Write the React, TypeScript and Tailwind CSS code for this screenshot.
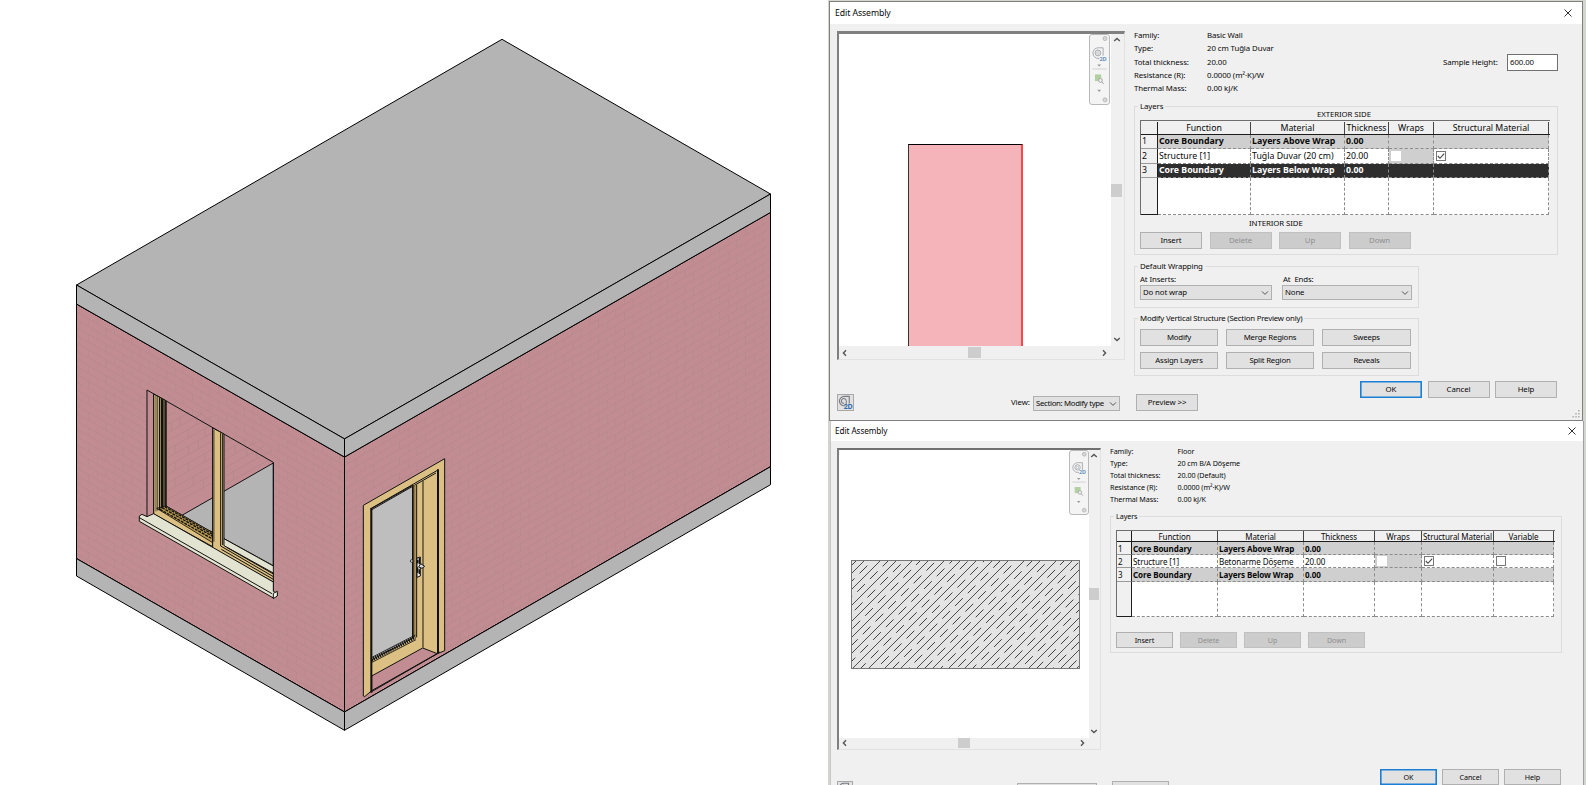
import React from "react";

type Col = { w: string; label: string };
type Cell = { text?: string; check?: "on" | "off" | "disabled"; grey?: boolean };
type Row = { cells: Cell[]; kind: "core" | "layer" | "selected" };

const cx = (...p: (string | false | undefined)[]) => p.filter(Boolean).join(" ");

function House() {
  return (
    <svg width="828" height="785" viewBox="0 0 828 785" className="block">
      <defs>
        <pattern id="brickL" width="17.3" height="15.6" patternUnits="userSpaceOnUse" patternTransform="translate(77 303.8) skewY(29.88)">
          <path d="M0 .5H17.3M0 8.3H17.3M3 .5V8.3M11.6 8.3V16" stroke="#b2868c" strokeWidth=".65" fill="none" />
        </pattern>
        <pattern id="brickR" width="17.3" height="15.6" patternUnits="userSpaceOnUse" patternTransform="translate(344.6 457.1) skewY(-29.88)">
          <path d="M0 .5H17.3M0 8.3H17.3M3 .5V8.3M11.6 8.3V16" stroke="#b2868c" strokeWidth=".65" fill="none" />
        </pattern>
      </defs>
      <g stroke="#000" strokeWidth="1" strokeLinejoin="round">
        <path d="M76.5 304L344.5 457V712L76.5 558.6Z" fill="#c18d92" />
        <path d="M76.5 304L344.5 457V712L76.5 558.6Z" fill="url(#brickL)" />
        <path d="M344.5 457L770.5 212.4V466.7L344.5 712Z" fill="#c18d92" />
        <path d="M344.5 457L770.5 212.4V466.7L344.5 712Z" fill="url(#brickR)" />
        <path d="M76.5 285L502 39.3L770.5 194L344.5 438.9Z" fill="#b4b4b4" />
        <path d="M76.5 285L344.5 438.9V457L76.5 304Z" fill="#b4b4b4" />
        <path d="M344.5 438.9L770.5 194V212.4L344.5 457Z" fill="#b4b4b4" />
        <path d="M76.5 558.6L344.5 712V730.3L76.5 576Z" fill="#b4b4b4" />
        <path d="M344.5 712L770.5 466.7V484.7L344.5 730.3Z" fill="#b4b4b4" />
      </g>
      <g transform="translate(60 370) scale(.33333)" stroke="#111" strokeWidth="3" fill="none">
        <path d="M261 60L640 277V640L261 440Z" fill="#c18d92" stroke="none" />
        <g stroke="#b0858b" strokeWidth="2">
          <path d="M320 140L345 126M320 165L390 126M320 190L430 128M320 215L455 139M320 240L457 163M320 265L457 188M320 290L457 213M320 315L457 238M320 340L457 263M320 365L457 288M320 390L457 313M340 402L457 338M492 220L530 199M492 245L560 207M492 270L590 216M492 295L615 227M492 320L635 241M492 345L630 268" />
          <path d="M335 157V181M360 142V167M385 178V203M410 140V165M435 175V200M345 226V250M385 228V253M415 211V236M345 276V301M385 278V303M435 250V275M345 325V350M400 320V344M430 328V350M525 227V250M560 233V257M590 241V265M520 304V328" />
        </g>
        <path d="M350 445L640 279V587L492 506L458 486Z" fill="#b4b4b4" />
        <path d="M492 506L640 587V650L478 560Z" fill="#e3e3d2" stroke="none" />
        <path d="M261 60L640 277V664M261 60V440" />
        <path d="M281 72L318 92V408L458 488V530L281 432Z" fill="#dcc083" />
        <path d="M290 415L318 408L458 488V518Z" fill="#b8994f" strokeWidth="2.5" />
        <path d="M300 418L458 507M306 413L458 499M314 410L458 493" strokeWidth="4" strokeDasharray="9 3" />
        <path d="M281 72V432M288 76V424M293 78V422" strokeWidth="2" />
        <path d="M299 82V420M305 85V415M309 88V412M315 91V408" strokeWidth="4" />
        <path d="M318 92V410" strokeWidth="3" />
        <path d="M458 174L492 192V527L640 609V636L458 535Z" fill="#dcc083" />
        <path d="M482 188V528L640 620M488 192V525M492 506L640 588M500 532L640 612M484 538L640 628" strokeWidth="3" />
        <path d="M458 176V518M462 180V515" strokeWidth="2" />
        <path d="M238 438L246 433L261 440L281 431L640 636V664L652 670V676L640 684L238 454Z" fill="#e3e3d2" />
        <path d="M640 670L652 664V678L640 686Z" fill="#f2f2e8" />
        <path d="M238 443L636 671" />
      </g>
      <g transform="translate(330 430) scale(.33333)" stroke="#111" strokeWidth="3" fill="none">
        <path d="M100 226L344 86V662L322 671L125 782L104 800L100 798Z" fill="#dcc083" />
        <path d="M125 738L278 654L322 671L125 785Z" fill="#c18d92" />
        <path d="M125 782L330 666" />
        <path d="M124 236L248 166V625L124 690Z" fill="#bebebe" />
        <path d="M122 236L324 120M122 241L318 129" strokeWidth="3" />
        <path d="M124 234V788M324 118V670" strokeWidth="6" />
        <path d="M251 166V626" strokeWidth="3" />
        <path d="M248 166V622" strokeWidth="4" />
        <path d="M254 166V622" stroke="#927b49" strokeWidth="6" />
        <path d="M260 164V622" />
        <path d="M279 153V653" strokeWidth="4" stroke="#4a4029" />
        <path d="M124 690L256 622" strokeWidth="10" strokeDasharray="4 3" />
        <path d="M124 683L256 615M126 697L258 629" strokeWidth="2.5" />
        <path d="M261 384L271 381V438L261 442Z" fill="#eee" />
        <path d="M263 390V400M263 412V428M268 384V402M268 418V432" strokeWidth="4" />
        <path d="M266 411L272 401L284 409L276 415Z" fill="#ddd" />
        <circle cx="245" cy="393" r="4" fill="#ccc" strokeWidth="2" />
      </g>
    </svg>
  );
}

function WheelIcon({ className, plain }: { className: string; plain?: boolean }) {
  return (
    <svg viewBox="0 0 16 16" className={className} fill="none">
      <path d="M12 9V1.5H6.5A5 5 0 0 0 6.5 11.5H8" stroke="#777c84" strokeWidth="1.2" />
      <path d="M8.8 9.5V6.3A2.6 2.6 0 1 0 6.5 8.9" stroke="#777c84" strokeWidth="1.1" />
      {!plain && (
        <text x="6" y="15" fontSize="7.5" fontWeight="700" fill="#2f6db0" fontFamily="Noto Sans, sans-serif" textLength="9.6">
          2D
        </text>
      )}
    </svg>
  );
}

function NavBar({ small }: { small?: boolean }) {
  return (
    <div className={cx("flex shrink-0 flex-col items-center rounded-[3px] border border-[#b9b9b9] bg-[#f4f4f4]", small ? "h-[65px] w-[20px]" : "mr-px h-[71px] w-[21px]")}>
      <svg viewBox="0 0 20 70" className="h-full w-full" preserveAspectRatio="none" fill="none">
        <circle cx="15.8" cy="3.6" r="2.1" fill="#d8d8d8" stroke="#a8a8a8" strokeWidth=".7" />
        <path d="M13.8 21V13H8.5A5.2 5.2 0 0 0 8.5 23.8H10" stroke="#a5a9ae" />
        <circle cx="8.4" cy="18.2" r="3" stroke="#a5a9ae" />
        <path d="M7.2 17h2.4v2.4H7.2z" stroke="#b4b7bb" strokeWidth=".7" />
        <text x="10" y="26" fontSize="6" fontWeight="700" fill="#6c95c2" fontFamily="Noto Sans, sans-serif" textLength="7.6">2D</text>
        <path d="M7.7 30h4l-2 2.2z" fill="#9a9a9a" />
        <path d="M2.5 34.5h15" stroke="#cfcfcf" />
        <path d="M5.2 40h6.6v6.8H5.2z" fill="#b3d0a2" />
        <circle cx="11" cy="46" r="2" fill="#eee" stroke="#999" strokeWidth=".8" />
        <path d="M12.4 47.6l2 2" stroke="#999" />
        <path d="M7.7 55.5h4l-2 2.2z" fill="#9a9a9a" />
        <circle cx="15.8" cy="65.8" r="2.1" fill="#d8d8d8" stroke="#a8a8a8" strokeWidth=".7" />
      </svg>
    </div>
  );
}

function Chevron({ dir }: { dir: "up" | "down" | "left" | "right" }) {
  const d = { up: "M1.2 5L4 2.4L6.8 5", down: "M1.2 3L4 5.6L6.8 3", left: "M5 1.2L2.4 4L5 6.8", right: "M3 1.2L5.6 4L3 6.8" }[dir];
  return (
    <svg viewBox="0 0 8 8" className="h-2 w-2 shrink-0">
      <path d={d} stroke="#555" strokeWidth="1.4" fill="none" />
    </svg>
  );
}

function Btn({ children, className, off, primary }: { children?: React.ReactNode; className: string; off?: boolean; primary?: boolean }) {
  return (
    <button
      className={cx(
        "flex shrink-0 items-center justify-center whitespace-pre",
        className,
        primary
          ? "border border-[#1a7fd6] bg-[#e1e1e1] shadow-[inset_0_0_0_0.6px_#1a7fd6]"
          : off
            ? "border border-[#c0c0c0] bg-[#cccccc] text-[#8f8f8f]"
            : "border border-[#b0b0b0] bg-[#e1e1e1]",
      )}
    >
      {children}
    </button>
  );
}

function Select({ children, className }: { children: React.ReactNode; className: string }) {
  return (
    <div className={cx("flex shrink-0 items-center justify-between border border-[#b0b0b0] bg-[#e1e1e1] pr-[2px] pl-[2px] whitespace-nowrap", className)}>
      <span>{children}</span>
      <svg viewBox="0 0 8 8" className="h-2 w-2 shrink-0">
        <path d="M1 2.4L4 5.4L7 2.4" stroke="#555" strokeWidth="1" fill="none" />
      </svg>
    </div>
  );
}

function Group({ title, className, children }: { title: string; className: string; children: React.ReactNode }) {
  return (
    <div className={cx("flex shrink-0 flex-col border border-[#dcdcdc]", className)}>
      <div className="-mt-[6px] ml-[3px] h-[11px] w-fit shrink-0 bg-[#f0f0f0] px-[2px] leading-[11px]">{title}</div>
      {children}
    </div>
  );
}

function Check({ state }: { state: "on" | "off" | "disabled" }) {
  return (
    <span className={cx("ml-px flex h-[10px] w-[10px] items-center justify-center border bg-white", state === "disabled" ? "border-white" : "border-[#777]")}>
      {state === "on" && (
        <svg viewBox="0 0 8 8" className="h-2 w-2">
          <path d="M.8 4L3 6.3L7.2 1.6" stroke="#444" strokeWidth="1.1" fill="none" />
        </svg>
      )}
    </span>
  );
}

function LayerTable({ cols, rows, numW, headH, rowH, restH, className }: { cols: Col[]; rows: Row[]; numW: string; headH: string; rowH: string[]; restH: string; className: string }) {
  return (
    <div className={cx("flex shrink-0 flex-col border-t border-l border-[#6e6e6e]", className)}>
      <div className={cx("flex shrink-0 border-b border-[#1c1c1c]", headH)}>
        <div className={cx("shrink-0 border-r border-[#1c1c1c]", numW)} />
        {cols.map((c) => (
          <div key={c.label} className={cx("flex shrink-0 items-center justify-center overflow-hidden border-r border-[#444] whitespace-nowrap", c.w)}>
            {c.label}
          </div>
        ))}
      </div>
      {rows.map((r, i) => (
        <div key={i} className={cx("flex shrink-0", rowH[i])}>
          <div className={cx("flex shrink-0 items-center border-r border-b border-r-[#1c1c1c] border-b-[#9a9a9a] pl-[1px]", numW)}>{i + 1}</div>
          {r.cells.map((c, j) => (
            <div
              key={j}
              className={cx(
                "flex shrink-0 items-center overflow-hidden border-r border-b border-dashed border-[#8c8c8c] pl-[1px] whitespace-nowrap",
                cols[j].w,
                r.kind === "core" && "bg-[#cfcfcf] font-bold",
                r.kind === "selected" && "bg-[#2e2e2e] font-bold text-white",
                r.kind === "layer" && (c.grey ? "bg-[#cfcfcf]" : "bg-white"),
              )}
            >
              {c.text}
              {c.check && <Check state={c.check} />}
            </div>
          ))}
        </div>
      ))}
      <div className={cx("flex shrink-0", restH)}>
        <div className={cx("shrink-0 border-r border-b border-[#1c1c1c]", numW)} />
        {cols.map((c) => (
          <div key={c.label} className={cx("shrink-0 border-r border-b border-dashed border-[#8c8c8c] bg-white", c.w)} />
        ))}
      </div>
    </div>
  );
}

function Info({ rows, labelW, rowH, className }: { rows: [string, string][]; labelW: string; rowH: string; className: string }) {
  return (
    <div className={cx("flex flex-col", className)}>
      {rows.map(([a, b]) => (
        <div key={a} className={cx("flex items-center whitespace-nowrap", rowH)}>
          <span className={labelW}>{a}</span>
          <span>{b}</span>
        </div>
      ))}
    </div>
  );
}

function TitleBar({ className }: { className: string }) {
  return (
    <div className={cx("flex shrink-0 items-center justify-between bg-white", className)}>
      <span>Edit Assembly</span>
      <svg viewBox="0 0 8 8" className="h-2 w-2">
        <path d="M.5 .5L7.5 7.5M7.5 .5L.5 7.5" stroke="#333" strokeWidth="1" />
      </svg>
    </div>
  );
}

const hatchLines = Array.from({ length: 44 }, (_, i) => i);

function Hatch() {
  return (
    <svg width="229" height="109" viewBox="0 0 229 109" className="block">
      <rect width="229" height="109" fill="#e4e4e4" />
      {hatchLines.map((i) => (
        <path
          key={i}
          d={`M${i * 8 + 6} 0l-109 109`}
          stroke={i % 2 ? "#333" : "#222"}
          strokeWidth=".85"
          strokeDasharray={i % 2 ? undefined : "11 7"}
          strokeDashoffset={(i * 5) % 18}
        />
      ))}
      <rect x=".5" y=".5" width="228" height="108" fill="none" stroke="#777" />
    </svg>
  );
}

const cell = (text: string): Cell => ({ text });
const wallCols: Col[] = [
  { w: "w-[93px]", label: "Function" },
  { w: "w-[94px]", label: "Material" },
  { w: "w-[44px]", label: "Thickness" },
  { w: "w-[45px]", label: "Wraps" },
  { w: "w-[115px]", label: "Structural Material" },
];
const wallRows: Row[] = [
  { kind: "core", cells: [cell("Core Boundary"), cell("Layers Above Wrap"), cell("0.00"), {}, {}] },
  { kind: "layer", cells: [cell("Structure [1]"), cell("Tuğla Duvar (20 cm)"), cell("20.00"), { check: "disabled", grey: true }, { check: "on" }] },
  { kind: "selected", cells: [cell("Core Boundary"), cell("Layers Below Wrap"), cell("0.00"), {}, {}] },
];
const floorCols: Col[] = [
  { w: "w-[86px]", label: "Function" },
  { w: "w-[86px]", label: "Material" },
  { w: "w-[71px]", label: "Thickness" },
  { w: "w-[47px]", label: "Wraps" },
  { w: "w-[72px]", label: "Structural Material" },
  { w: "w-[60px]", label: "Variable" },
];
const floorRows: Row[] = [
  { kind: "core", cells: [cell("Core Boundary"), cell("Layers Above Wrap"), cell("0.00"), {}, {}, {}] },
  { kind: "layer", cells: [cell("Structure [1]"), cell("Betonarme Döşeme"), cell("20.00"), { check: "disabled", grey: true }, { check: "on" }, { check: "off" }] },
  { kind: "core", cells: [cell("Core Boundary"), cell("Layers Below Wrap"), cell("0.00"), {}, {}, {}] },
];

function WallDialog() {
  return (
    <section className="flex h-[420px] w-[754px] shrink-0 flex-col border border-[#808080] bg-[#f0f0f0]">
      <TitleBar className="h-[22px] pr-[10px] pl-[5px] text-[8.7px]" />
      <div className="flex grow">
        <div className="flex w-[304px] shrink-0 flex-col pt-[7px] pl-[7px]">
          <div className="flex h-[329px] w-[288px] shrink-0 flex-col border-t-[3px] border-r border-b border-l-2 border-t-[#808080] border-r-[#e2e2e2] border-b-[#e2e2e2] border-l-[#808080]">
            <div className="flex h-[312px] shrink-0">
              <div className="flex w-[272px] justify-between bg-white">
                <div className="mt-[110px] ml-[69px] h-[202px] w-[115px] border-t border-r-2 border-l-[1.5px] border-t-black border-r-[#fb4549] border-l-[#333] bg-[#f5b4ba]" />
                <NavBar />
              </div>
              <div className="flex w-[11px] flex-col items-center pt-[2px] pb-[3px]">
                <Chevron dir="up" />
                <div className="mt-[140px] h-[13px] w-[11px] shrink-0 bg-[#cdcdcd]" />
                <div className="mt-auto h-2">
                  <Chevron dir="down" />
                </div>
              </div>
            </div>
            <div className="mt-px flex h-[11px] w-[272px] items-center pr-[3px] pl-[2px]">
              <Chevron dir="left" />
              <div className="ml-[119px] h-[11px] w-[13px] bg-[#cdcdcd]" />
              <div className="ml-auto">
                <Chevron dir="right" />
              </div>
            </div>
          </div>
          <div className="mt-[34px] flex items-start">
            <div className="flex h-[17px] w-[17px] items-center justify-center border border-[#a8a8a8] bg-[#e1e1e1]">
              <WheelIcon className="h-[15px] w-[15px]" />
            </div>
            <span className="mt-[3px] ml-[157px] w-[22px]">View:</span>
            <Select className="mt-[2px] h-[15px] w-[87px] tracking-[-0.04em]">Section: Modify type</Select>
          </div>
        </div>
        <div className="flex grow flex-col pt-[5px]">
          <div className="flex h-[67px] shrink-0">
            <Info
              className="w-[309px] shrink-0"
              labelW="w-[73px]"
              rowH="h-[13.25px]"
              rows={[["Family:", "Basic Wall"], ["Type:", "20 cm Tuğla Duvar"], ["Total thickness:", "20.00"], ["Resistance (R):", "0.0000 (m²·K)/W"], ["Thermal Mass:", "0.00 kJ/K"]]}
            />
            <div className="mt-[24px] flex h-[18px] items-center whitespace-nowrap">
              <span className="w-[64px]">Sample Height:</span>
              <span className="flex h-[17px] w-[51px] items-center border border-[#707070] bg-white pl-[2px]">600.00</span>
            </div>
          </div>
          <Group title="Layers" className="mt-[10px] h-[149px] w-[424px]">
            <div className="-mt-[3px] h-[11px] pl-[182px] leading-[11px] whitespace-nowrap">EXTERIOR SIDE</div>
            <LayerTable className="ml-[5px] w-[410px] text-[8.75px] tracking-normal" cols={wallCols} rows={wallRows} numW="w-[17px]" headH="h-[14px] pt-px" rowH={["h-[14px]", "h-[15px]", "h-[14px]"]} restH="h-[37px]" />
            <div className="mt-[4px] h-[9px] pl-[114px] leading-[9px] whitespace-nowrap">INTERIOR SIDE</div>
            <div className="mt-[4px] flex gap-[7.5px] pl-[5px]">
              <Btn className="h-[17px] w-[62px]">Insert</Btn>
              <Btn off className="h-[17px] w-[62px]">Delete</Btn>
              <Btn off className="h-[17px] w-[62px]">Up</Btn>
              <Btn off className="h-[17px] w-[62px]">Down</Btn>
            </div>
          </Group>
          <Group title="Default Wrapping" className="mt-[11px] h-[42px] w-[285px] tracking-[-0.015em]">
            <div className="mt-[2px] flex h-[11px] pl-[5px] leading-[11px] whitespace-pre">
              <span className="w-[143px]">At Inserts:</span>
              <span>{"At  Ends:"}</span>
            </div>
            <div className="flex gap-[10px] pl-[5px]">
              <Select className="h-[15px] w-[132px]">Do not wrap</Select>
              <Select className="h-[15px] w-[130px]">None</Select>
            </div>
          </Group>
          <Group title="Modify Vertical Structure (Section Preview only)" className="mt-[10px] h-[58px] w-[285px] tracking-[-0.025em]">
            <div className="mt-[5px] grid w-[276px] grid-cols-[78px_88px_89px] gap-x-[8px] gap-y-[6px] pl-[5px]">
              <Btn className="h-[17px]">Modify</Btn>
              <Btn className="h-[17px]">Merge Regions</Btn>
              <Btn className="h-[17px]">Sweeps</Btn>
              <Btn className="h-[17px]">Assign Layers</Btn>
              <Btn className="h-[17px]">Split Region</Btn>
              <Btn className="h-[17px]">Reveals</Btn>
            </div>
          </Group>
          <div className="mt-[5px] flex gap-[5.5px] pl-[226px]">
            <Btn primary className="h-[17px] w-[62px]">OK</Btn>
            <Btn className="h-[17px] w-[62px]">Cancel</Btn>
            <Btn className="h-[17px] w-[62px]">Help</Btn>
          </div>
          <div className="-mt-[4px] flex items-end justify-between pr-[2px] pl-[2px]">
            <Btn className="h-[17px] w-[62px]">{"Preview >>"}</Btn>
            <svg viewBox="0 0 8 8" className="-mb-[7px] h-2 w-2" fill="#b4b4b4">
              <path d="M6 0h1.6v1.6H6zM6 3h1.6v1.6H6zM6 6h1.6v1.6H6zM3.2 3h1.6v1.6H3.2zM3.2 6h1.6v1.6H3.2zM.4 6H2v1.6H.4z" />
            </svg>
          </div>
        </div>
      </div>
    </section>
  );
}

function FloorDialog() {
  return (
    <section className="ml-px flex h-[364px] w-[754px] shrink-0 flex-col overflow-hidden border-r border-l border-r-[#a0a0a0] border-l-[#c8c8c8] bg-[#f0f0f0] text-[7.2px]">
      <TitleBar className="h-[20px] pr-[7px] pb-px pl-[4px] text-[8.2px]" />
      <div className="flex grow">
        <div className="flex w-[279px] shrink-0 flex-col pt-[7px] pl-[6px]">
          <div className="flex h-[302px] w-[264px] shrink-0 flex-col border-t-2 border-r border-b border-l-2 border-t-[#707070] border-r-[#e2e2e2] border-b-[#e2e2e2] border-l-[#808080]">
            <div className="flex h-[288px] shrink-0">
              <div className="flex w-[250px] shrink-0 items-start bg-white">
                <div className="mt-[110px] ml-[12px] w-[218px] shrink-0">
                  <Hatch />
                </div>
                <NavBar small />
              </div>
              <div className="flex w-[10px] flex-col items-center pt-[2px] pb-[3px]">
                <Chevron dir="up" />
                <div className="mt-[128px] h-[12px] w-[10px] shrink-0 bg-[#cdcdcd]" />
                <div className="mt-auto h-2">
                  <Chevron dir="down" />
                </div>
              </div>
            </div>
            <div className="flex h-[10px] w-[250px] items-center pr-[3px] pl-[2px]">
              <Chevron dir="left" />
              <div className="ml-[109px] h-[10px] w-[12px] bg-[#cdcdcd]" />
              <div className="ml-auto">
                <Chevron dir="right" />
              </div>
            </div>
          </div>
          <div className="mt-[31px] flex items-start">
            <div className="flex h-[16px] w-[16px] items-center justify-center border border-[#a8a8a8] bg-[#e1e1e1]">
              <WheelIcon plain className="h-[14px] w-[14px]" />
            </div>
            <div className="mt-[2px] ml-[164px] h-[14px] w-[80px] border border-[#b0b0b0] bg-[#e1e1e1]" />
          </div>
        </div>
        <div className="flex grow flex-col pt-[4px]">
          <Info
            className="h-[61px] shrink-0"
            labelW="w-[67.5px]"
            rowH="h-[12.1px]"
            rows={[["Family:", "Floor"], ["Type:", "20 cm B/A Döşeme"], ["Total thickness:", "20.00 (Default)"], ["Resistance (R):", "0.0000 (m²·K)/W"], ["Thermal Mass:", "0.00 kJ/K"]]}
          />
          <Group title="Layers" className="mt-[10px] h-[137px] w-[452px]">
            <LayerTable className="mt-[8px] ml-[5px] w-[439px] text-[8.05px]" cols={floorCols} rows={floorRows} numW="w-[15px]" headH="h-[11px]" rowH={["h-[13px]", "h-[13px]", "h-[14px]"]} restH="h-[35px]" />
            <div className="mt-[15px] flex gap-[7px] pl-[5px]">
              <Btn className="h-[16px] w-[57px]">Insert</Btn>
              <Btn off className="h-[16px] w-[57px]">Delete</Btn>
              <Btn off className="h-[16px] w-[57px]">Up</Btn>
              <Btn off className="h-[16px] w-[57px]">Down</Btn>
            </div>
          </Group>
          <div className="mt-[116px] flex gap-[5px] pl-[270px]">
            <Btn primary className="h-[16px] w-[57px]">OK</Btn>
            <Btn className="h-[16px] w-[57px]">Cancel</Btn>
            <Btn className="h-[16px] w-[57px]">Help</Btn>
          </div>
          <div className="-mt-[4px] flex pl-[2px]">
            <Btn className="h-[16px] w-[57px]" />
          </div>
        </div>
      </div>
    </section>
  );
}

export default function App() {
  return (
    <main className="flex h-[785px] w-[1586px] overflow-hidden bg-white font-['Noto_Sans','Open_Sans',sans-serif] text-[7.8px] leading-[11px] tracking-[-0.01em] text-[#080808]">
      <House />
      <div className="flex w-[758px] flex-col bg-[#d3d6cf] pt-px pl-px">
        <WallDialog />
        <FloorDialog />
      </div>
    </main>
  );
}
